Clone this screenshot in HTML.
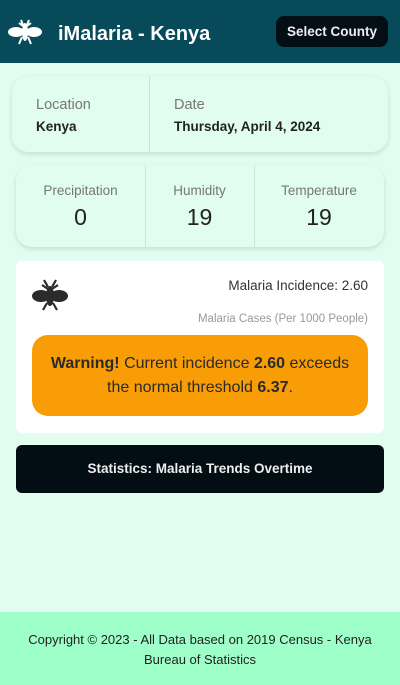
<!DOCTYPE html>
<html><head><style>
*{box-sizing:border-box;margin:0;padding:0}
body{width:400px;height:685px;background:#e0fdef;font-family:"Liberation Sans",sans-serif;position:relative;overflow:hidden;color:#222}
.hdr{position:absolute;left:0;top:0;width:400px;height:63px;background:#074b5a}
.title{position:absolute;left:58px;top:23px;color:#fff;font-size:20px;font-weight:bold}
.btn{position:absolute;left:276px;top:16px;width:112px;height:31px;background:#030e15;border-radius:8px;color:#eee;font-size:13.5px;font-weight:bold;text-align:center;line-height:32px}
.card{position:absolute;background:#e0fdef;border-radius:16px;box-shadow:0 2px 5px rgba(0,0,0,.12)}
.lbl{color:#777;font-size:14.5px}
.v{font-weight:bold;font-size:13.5px;color:#222}
.sep{position:absolute;top:0;bottom:0;width:1px;background:#c8e8d8}
.c3{position:absolute;text-align:center}
.num{font-size:23px;color:#222;margin-top:6px}
.white{position:absolute;left:16px;top:261px;width:368px;height:172px;background:#fff;border-radius:6px}
.warn{position:absolute;left:32px;top:335px;width:336px;height:81px;background:#f89d05;border-radius:16px;text-align:center;font-size:16px;line-height:24px;padding-top:17px;color:#2a2a2a}
.stat{position:absolute;left:16px;top:445px;width:368px;height:48px;background:#020d14;border-radius:6px;color:#eee;font-size:13.5px;font-weight:bold;text-align:center;line-height:48px}
.foot{position:absolute;left:0;top:612px;width:400px;height:73px;background:#9effc8;text-align:center;font-size:13px;line-height:20px;padding-top:18px;color:#222}
</style></head><body>
<div class="hdr">
<svg style="position:absolute;left:8px;top:18px" width="34" height="28" viewBox="0 0 34 28"><g fill="#fff"><ellipse cx="8" cy="14" rx="8" ry="5"/><ellipse cx="26" cy="14" rx="8" ry="5"/><ellipse cx="17" cy="14" rx="3" ry="9"/><path d="M13 2 L15 7 M21 2 L19 7 M11 5 L15 8 M23 5 L19 8" stroke="#fff" stroke-width="2"/><path d="M14 19 L11 26 M20 19 L23 26" stroke="#fff" stroke-width="2"/></g></svg>
<div class="title">iMalaria - Kenya</div>
<div class="btn">Select County</div>
</div>
<div class="card" style="left:12px;top:76px;width:376px;height:76px">
<div class="sep" style="left:137px"></div>
<div style="position:absolute;left:24px;top:21px"><div class="lbl">Location</div><div class="v" style="margin-top:6px">Kenya</div></div>
<div style="position:absolute;left:162px;top:21px"><div class="lbl">Date</div><div class="v" style="margin-top:6px">Thursday, April 4, 2024</div></div>
</div>
<div class="card" style="left:16px;top:165px;width:368px;height:82px">
<div class="sep" style="left:129px"></div><div class="sep" style="left:238px"></div>
<div class="c3" style="left:0;width:129px;top:18px"><div class="lbl" style="font-size:13.5px">Precipitation</div><div class="num">0</div></div>
<div class="c3" style="left:129px;width:109px;top:18px"><div class="lbl" style="font-size:13.5px">Humidity</div><div class="num">19</div></div>
<div class="c3" style="left:238px;width:130px;top:18px"><div class="lbl" style="font-size:13.5px">Temperature</div><div class="num">19</div></div>
</div>
<div class="white">
<svg style="position:absolute;left:16px;top:18px" width="36" height="32" viewBox="0 0 36 32"><g fill="#2b2b2b"><ellipse cx="9" cy="17" rx="9" ry="6"/><ellipse cx="27" cy="17" rx="9" ry="6"/><ellipse cx="18" cy="17" rx="4" ry="10"/><path d="M12 1 L16 8 M24 1 L20 8 M10 6 L16 10 M26 6 L20 10 M15 24 L11 31 M21 24 L25 31" stroke="#2b2b2b" stroke-width="2.2" fill="none"/></g></svg>
<div style="position:absolute;right:16px;top:17px;font-size:13.5px;color:#333">Malaria Incidence: 2.60</div>
<div style="position:absolute;right:16px;top:52px;font-size:11.5px;color:#999">Malaria Cases (Per 1000 People)</div>
</div>
<div class="warn"><b>Warning!</b> Current incidence <b>2.60</b> exceeds<br>the normal threshold <b>6.37</b>.</div>
<div class="stat">Statistics: Malaria Trends Overtime</div>
<div class="foot">Copyright © 2023 - All Data based on 2019 Census - Kenya<br>Bureau of Statistics</div>
</body></html>
